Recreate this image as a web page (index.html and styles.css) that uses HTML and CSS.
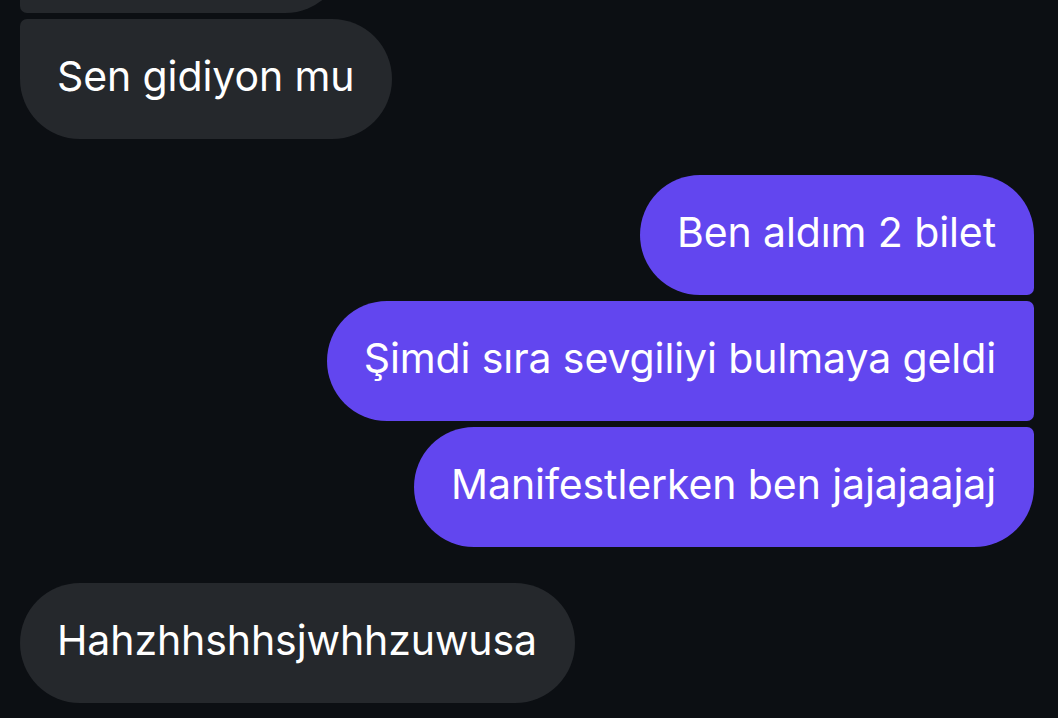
FILE: index.html
```html
<!DOCTYPE html>
<html lang="tr">
<head>
<meta charset="utf-8">
<title>Sohbet</title>
<link rel="stylesheet" href="styles.css">
</head>
<body>
<main class="thread">
  <section class="group group-in group-first">
    <div class="bubble in first stub"></div>
    <div class="bubble in last">Sen gidiyon mu</div>
  </section>
  <section class="group group-out">
    <div class="bubble out first">Ben aldım 2 bilet</div>
    <div class="bubble out mid">Şimdi sıra sevgiliyi bulmaya geldi</div>
    <div class="bubble out last">Manifestlerken ben jajajaajaj</div>
  </section>
  <section class="group group-in">
    <div class="bubble in single">Hahzhhshhsjwhhzuwusa</div>
  </section>
</main>
</body>
</html>
```
FILE: styles.css
```css
html, body {
  margin: 0;
  padding: 0;
  background: #0c0f13;
  height: 100%;
  overflow: hidden;
}

.thread {
  display: flex;
  flex-direction: column;
  gap: 36px;
  padding: 0 24px 0 20px;
  font-family: Inter, "Noto Sans", sans-serif;
  color: #ffffff;
}

.group {
  display: flex;
  flex-direction: column;
  gap: 6px;
}

.group-in { align-items: flex-start; }
.group-out { align-items: flex-end; }

/* earlier message scrolled mostly out of view */
.group-first { margin-top: -107px; }

.bubble {
  box-sizing: border-box;
  height: 120px;
  padding: 0 38px 6px 37px;
  display: flex;
  align-items: center;
  font-size: 41px;
  letter-spacing: -0.1px;
  white-space: nowrap;
  border-radius: 60px;
}

.bubble.in { background: #25282c; }
.bubble.out { background: #6246ef; }

.stub { width: 325px; }

.in.first { border-bottom-left-radius: 7px; }
.in.last { border-top-left-radius: 7px; }
.out.first { border-bottom-right-radius: 7px; }
.out.mid { border-top-right-radius: 7px; border-bottom-right-radius: 7px; }
.out.last { border-top-right-radius: 7px; }
```
